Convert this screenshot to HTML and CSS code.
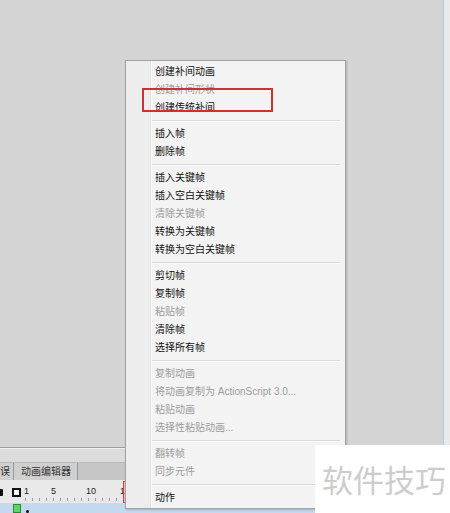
FILE: index.html
```html
<!DOCTYPE html>
<html lang="zh-CN">
<head>
    <meta charset="UTF-8">
    <meta name="viewport" content="width=device-width, initial-scale=1.0">
    <title>时间轴右键菜单</title>
    <link rel="stylesheet" href="styles.css">
</head>
<body>
    <div class="workspace">
        <div class="stage">
            <div class="stage-main"></div>
            <div class="stage-edge"></div>
        </div>

        <div class="timeline">
            <div class="timeline-gap"></div>
            <div class="tabs">
                <span class="tab tab-cut">误</span>
                <span class="tab">动画编辑器</span>
            </div>
            <div class="ruler">
                <span class="icon-lock"></span>
                <span class="icon-outline"></span>
                <div class="ruler-scale">
                    <span class="num n1">1</span>
                    <span class="num n5">5</span>
                    <span class="num n10">10</span>
                    <span class="num n15">1</span>
                    <span class="playhead"></span>
                </div>
            </div>
            <div class="layer-row">
                <span class="layer-swatch"></span>
                <span class="layer-dot"></span>
            </div>
        </div>
    </div>

    <ul class="context-menu">
        <li>创建补间动画</li>
        <li class="disabled">创建补间形状</li>
        <li>创建传统补间</li>
        <li class="sep"></li>
        <li>插入帧</li>
        <li>删除帧</li>
        <li class="sep"></li>
        <li>插入关键帧</li>
        <li>插入空白关键帧</li>
        <li class="disabled">清除关键帧</li>
        <li>转换为关键帧</li>
        <li>转换为空白关键帧</li>
        <li class="sep"></li>
        <li>剪切帧</li>
        <li>复制帧</li>
        <li class="disabled">粘贴帧</li>
        <li>清除帧</li>
        <li>选择所有帧</li>
        <li class="sep"></li>
        <li class="disabled">复制动画</li>
        <li class="disabled">将动画复制为 ActionScript 3.0...</li>
        <li class="disabled">粘贴动画</li>
        <li class="disabled">选择性粘贴动画...</li>
        <li class="sep"></li>
        <li class="disabled">翻转帧</li>
        <li class="disabled">同步元件</li>
        <li class="sep"></li>
        <li>动作</li>
    </ul>

    <div class="highlight"></div>

    <div class="watermark">软件技巧</div>
</body>
</html>
```

FILE: styles.css
```css
body {
    margin: 0;
    width: 450px;
    height: 513px;
    overflow: hidden;
    position: relative;
    background-color: #d4d4d4;
    font-family: "Liberation Sans", "Noto Sans CJK SC", sans-serif;
    color: #111;
}

.workspace {
    display: flex;
    flex-direction: column;
    height: 100%;
}

.stage {
    flex: 1;
    display: flex;
}

.stage-main {
    flex: 1;
    background-color: #d4d4d4;
}

.stage-edge {
    width: 6px;
    border-left: 1px solid #a9d3dc;
    background-color: #eaeaea;
}

/* timeline panel at the bottom */
.timeline {
    height: 65px;
    display: flex;
    flex-direction: column;
    border-top: 1px solid #9c9c9c;
}

.timeline-gap {
    height: 13px;
    border-top: 1px solid #f0f0f0;
    background-color: #dcdcdc;
}

.tabs {
    height: 17px;
    display: flex;
    background-color: #c6c6c6;
    border-top: 1px solid #b8b8b8;
}

.tab {
    font-size: 10px;
    line-height: 18px;
    padding: 0 6px 0 7px;
    background-color: #d0d0d0;
    border-right: 1px solid #9a9a9a;
    color: #333;
}

.tab-cut {
    padding: 0 3px 0 0;
}

.ruler {
    height: 23px;
    display: flex;
    align-items: center;
    background-color: #e9e9e9;
}

.icon-lock {
    width: 3px;
    height: 7px;
    background-color: #111;
    border-radius: 0 1px 1px 0;
    margin-right: 9px;
    margin-top: 2px;
}

.icon-outline {
    width: 5px;
    height: 5px;
    border: 2px solid #111;
    background-color: #fff;
    margin-top: 2px;
}

.ruler-scale {
    flex: 1;
    align-self: stretch;
    position: relative;
    background-image: repeating-linear-gradient(90deg, #9a9a9a 0, #9a9a9a 1px, transparent 1px, transparent 7px);
    background-size: 100% 3px;
    background-repeat: no-repeat;
    background-position: 4px 18px;
}

.num {
    position: absolute;
    top: 6px;
    font-size: 9px;
    color: #222;
}

.n1 { left: 3px; }
.n5 { left: 30px; }
.n10 { left: 65px; }
.n15 { left: 99px; }

.playhead {
    position: absolute;
    left: 102px;
    top: 1px;
    width: 3px;
    height: 20px;
    border: 1px solid #d04040;
    background-color: rgba(230, 120, 120, 0.35);
}

.layer-row {
    flex: 1;
    display: flex;
    align-items: center;
    background-color: #c4d8f0;
    padding-left: 13px;
}

.layer-swatch {
    width: 6px;
    height: 7px;
    background-color: #5fd36a;
    border: 1px solid #2c8a34;
}

.layer-dot {
    width: 3px;
    height: 3px;
    border-radius: 50%;
    background-color: #111;
    margin-left: 5px;
    margin-top: 6px;
}

/* right-click menu floating over the timeline */
.context-menu {
    position: absolute;
    left: 125px;
    top: 60px;
    width: 219px;
    margin: 0;
    padding: 2px 0 1px;
    list-style: none;
    background-color: #f1f1f1;
    background-image: linear-gradient(90deg, #ededed 0, #ededed 24px, #e2e2e2 24px, #e2e2e2 25px, #fafafa 25px, #fafafa 26px, #f3f3f3 26px);
    border: 1px solid #a3a3a3;
    box-shadow: 1px 1px 2px rgba(0, 0, 0, 0.18);
}

.context-menu li {
    height: 18px;
    line-height: 18px;
    padding-left: 29px;
    font-size: 10px;
    white-space: nowrap;
}

.context-menu li.disabled {
    color: #9c9c9c;
}

.context-menu li.sep {
    height: 0;
    margin: 3px 5px 3px 26px;
    padding: 0;
    border-top: 1px solid #d9d9d9;
    border-bottom: 1px solid #fcfcfc;
}

.highlight {
    position: absolute;
    left: 142px;
    top: 88px;
    width: 127px;
    height: 20px;
    border: 2px solid #cf2f2f;
}

.watermark {
    position: absolute;
    left: 315px;
    top: 445px;
    right: 0;
    bottom: 0;
    padding-left: 7px;
    background-color: #fff;
    color: #cdcdcd;
    font-family: "Noto Sans CJK SC", sans-serif;
    font-size: 31px;
    line-height: 68px;
}
```
